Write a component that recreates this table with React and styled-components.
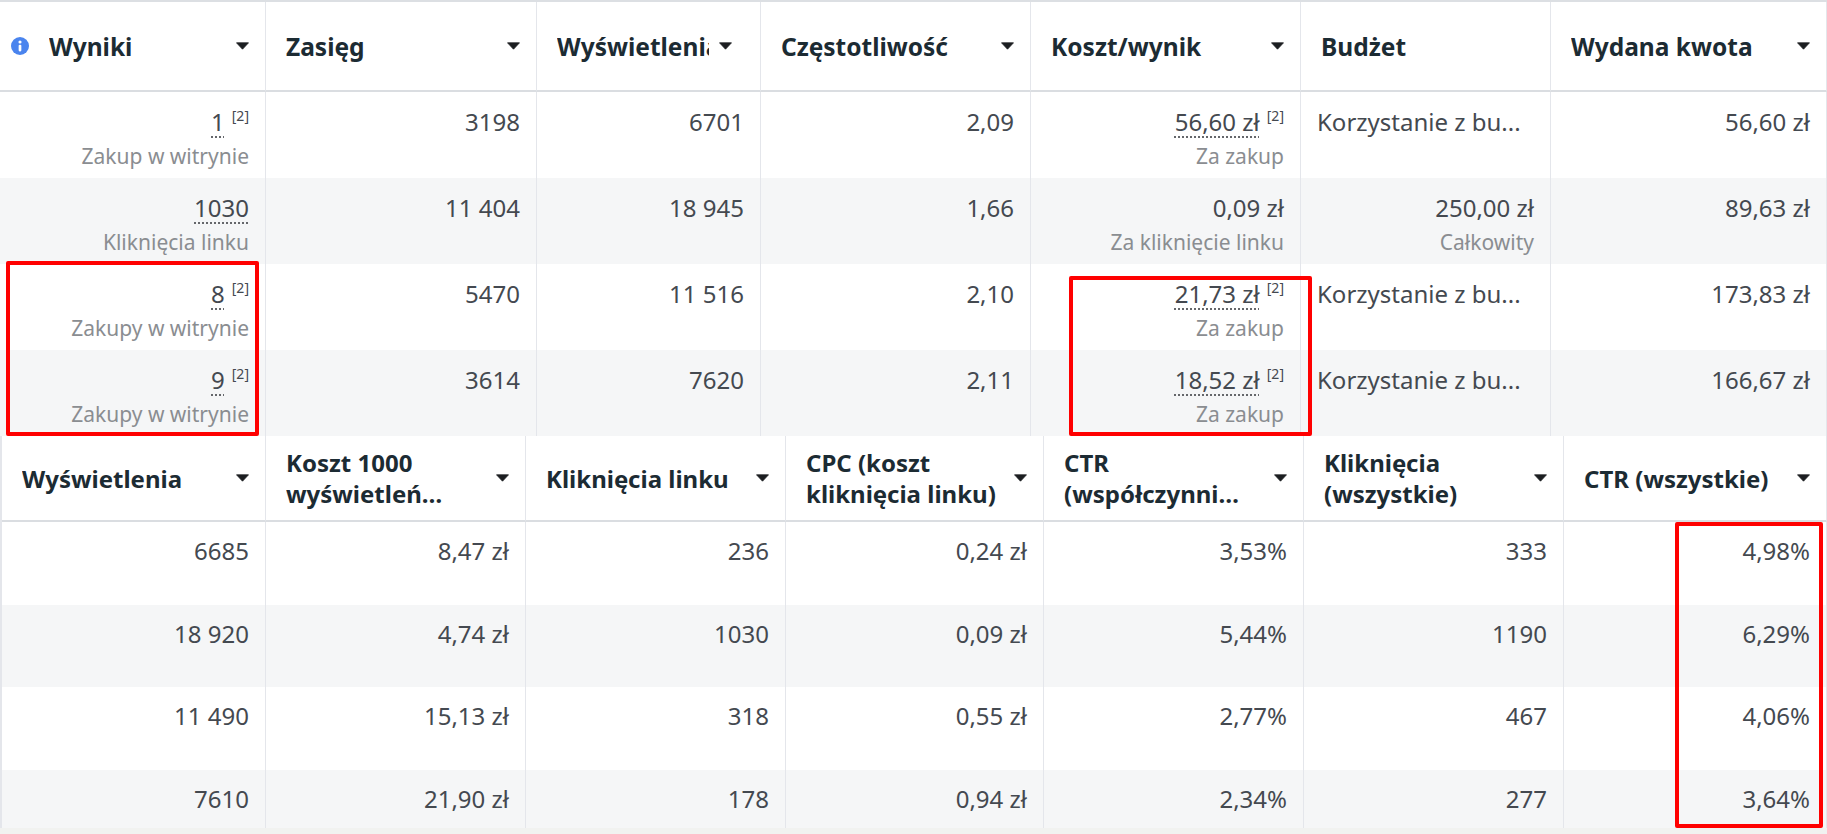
import React from 'react';
import styled, { createGlobalStyle } from 'styled-components';

const GlobalStyle = createGlobalStyle`
  html, body {
    margin: 0;
    padding: 0;
    background: #ffffff;
  }
  body {
    font-family: "Noto Sans", "Liberation Sans", sans-serif;
  }
`

const Page = styled.div`
    position: relative;
    width: 1827px;
    height: 834px;
    overflow: hidden;
    display: flex;
    flex-direction: column;
    background: #fff;
`
const Grid = styled.div`
    display: grid;
    grid-template-columns: ${p => p.$cols};
`
const TopGrid = styled(Grid)`
    border-top: 2px solid #dcdfe3;
`
const BottomGrid = styled(Grid)`
    border-left: 2px solid #e4e6eb;
`
const BottomBody = styled.div`
    height: 306px;
    overflow: hidden;
    border-left: 2px solid #e4e6eb;
`
const Strip = styled.div`
    flex: 1;
    background: #f1f2f0;
`
const HeadCell = styled.div`
    display: flex;
    align-items: center;
    gap: 10px;
    height: ${p => p.$h}px;
    padding: 0 16px 0 ${p => (p.$icon ? 11 : 20)}px;
    border-right: 1px solid #e4e6eb;
    border-bottom: 2px solid #dadde1;
    box-sizing: border-box;
    background: #fff;
    color: #1c2b33;
    font-weight: 700;
    font-size: ${p => p.$fs}px;
    min-width: 0;
`
const HeadLabel = styled.div`
    flex: 1;
    min-width: 0;
    max-width: ${p => (p.$clip ? `${p.$clip}px` : 'none')};
    overflow: hidden;
    white-space: nowrap;
    line-height: 31px;
`
const HeadLine = styled.span`
    display: block;
`
const InfoIcon = styled.svg`
    flex: none;
    margin-right: 10px;
`
const Caret = styled.svg`
    flex: none;
`
const Cell = styled.div`
    display: flex;
    flex-direction: column;
    align-items: ${p => (p.$left ? 'flex-start' : 'flex-end')};
    height: ${p => p.$h}px;
    padding: ${p => p.$pt}px 16px 0 ${p => (p.$left ? 16 : 12)}px;
    box-sizing: border-box;
    border-right: 1px solid #e4e6eb;
    background: ${p => (p.$alt ? '#f5f6f7' : '#fff')};
    min-width: 0;
`
const Value = styled.div`
    font-size: 24px;
    line-height: 30px;
    color: #444950;
    white-space: nowrap;
`
const Dotted = styled.span`
    text-decoration: underline dotted #65676b;
    text-decoration-thickness: 2px;
    text-underline-offset: 5px;
`
const Sup = styled.sup`
    font-size: 14px;
    color: #444950;
    margin-left: 7px;
    vertical-align: 10px;
    line-height: 0;
`
const Sub = styled.div`
    margin-top: 6px;
    font-size: 21px;
    line-height: 27px;
    color: #8a8d91;
    white-space: nowrap;
`
const Highlight = styled.div`
    position: absolute;
    left: ${p => p.$x}px;
    top: ${p => p.$y}px;
    width: ${p => p.$w}px;
    height: ${p => p.$h}px;
    border: 4px solid #ff0000;
    border-radius: 2px;
    box-sizing: border-box;
    pointer-events: none;
`

const topCols = '266px 271px 224px 270px 270px 250px 1fr';
const bottomCols = '264px 260px 260px 258px 260px 260px 1fr';

const topHeaders = [
    { label: ['Wyniki'], icon: true, caret: true },
    { label: ['Zasięg'], caret: true },
    { label: ['Wyświetlenia'], caret: true, clip: 152 },
    { label: ['Częstotliwość'], caret: true },
    { label: ['Koszt/wynik'], caret: true },
    { label: ['Budżet'] },
    { label: ['Wydana kwota'], caret: true },
];

const bottomHeaders = [
    { label: ['Wyświetlenia'], caret: true },
    { label: ['Koszt 1000', 'wyświetleń…'], caret: true },
    { label: ['Kliknięcia linku'], caret: true },
    { label: ['CPC (koszt', 'kliknięcia linku)'], caret: true },
    { label: ['CTR', '(współczynni…'], caret: true },
    { label: ['Kliknięcia', '(wszystkie)'], caret: true },
    { label: ['CTR (wszystkie)'], caret: true },
];

const budget = { value: 'Korzystanie z bu...', left: true };

const topRows = [
    [
        { value: '1', dotted: true, sup: true, sub: 'Zakup w witrynie' },
        { value: '3198' }, { value: '6701' }, { value: '2,09' },
        { value: '56,60 zł', dotted: true, sup: true, sub: 'Za zakup' },
        budget,
        { value: '56,60 zł' },
    ],
    [
        { value: '1030', dotted: true, sub: 'Kliknięcia linku' },
        { value: '11 404' }, { value: '18 945' }, { value: '1,66' },
        { value: '0,09 zł', sub: 'Za kliknięcie linku' },
        { value: '250,00 zł', sub: 'Całkowity' },
        { value: '89,63 zł' },
    ],
    [
        { value: '8', dotted: true, sup: true, sub: 'Zakupy w witrynie' },
        { value: '5470' }, { value: '11 516' }, { value: '2,10' },
        { value: '21,73 zł', dotted: true, sup: true, sub: 'Za zakup' },
        budget,
        { value: '173,83 zł' },
    ],
    [
        { value: '9', dotted: true, sup: true, sub: 'Zakupy w witrynie' },
        { value: '3614' }, { value: '7620' }, { value: '2,11' },
        { value: '18,52 zł', dotted: true, sup: true, sub: 'Za zakup' },
        budget,
        { value: '166,67 zł' },
    ],
];

const bottomRows = [
    ['6685', '8,47 zł', '236', '0,24 zł', '3,53%', '333', '4,98%'],
    ['18 920', '4,74 zł', '1030', '0,09 zł', '5,44%', '1190', '6,29%'],
    ['11 490', '15,13 zł', '318', '0,55 zł', '2,77%', '467', '4,06%'],
    ['7610', '21,90 zł', '178', '0,94 zł', '2,34%', '277', '3,64%'],
];

const Header = ({ col, height, fontSize }) => (
    <HeadCell $h={height} $icon={col.icon} $fs={fontSize}>
        {col.icon && (
            <InfoIcon width="18" height="18" viewBox="0 0 16 16">
                <circle cx="8" cy="8" r="8" fill="#4a84ee" />
                <circle cx="8" cy="4.4" r="1.4" fill="#fff" />
                <rect x="6.8" y="6.8" width="2.4" height="6" rx="1" fill="#fff" />
            </InfoIcon>
        )}
        <HeadLabel $clip={col.clip}>
            {col.label.map(line => <HeadLine key={line}>{line}</HeadLine>)}
        </HeadLabel>
        {col.caret && (
            <Caret width="13" height="8" viewBox="0 0 13 8">
                <path d="M0.5 0.8h12l-6 6.4z" fill="#1c1e21" stroke="#1c1e21" strokeWidth="0.8" strokeLinejoin="round" />
            </Caret>
        )}
    </HeadCell>
);

const App = () => {
    return (
        <Page>
            <GlobalStyle />
            <TopGrid $cols={topCols}>
                {topHeaders.map((col, i) => <Header key={i} col={col} height={90} fontSize={24.5} />)}
                {topRows.map((row, r) =>
                    row.map((c, i) => (
                        <Cell key={`${r}-${i}`} $alt={r % 2 === 1} $left={c.left} $h={86} $pt={15}>
                            <Value>
                                {c.dotted ? <Dotted>{c.value}</Dotted> : c.value}
                                {c.sup && <Sup>[2]</Sup>}
                            </Value>
                            {c.sub && <Sub>{c.sub}</Sub>}
                        </Cell>
                    ))
                )}
            </TopGrid>
            <BottomGrid $cols={bottomCols}>
                {bottomHeaders.map((col, i) => <Header key={i} col={col} height={86} fontSize={24} />)}
            </BottomGrid>
            <BottomBody>
                <Grid $cols={bottomCols}>
                    {bottomRows.map((row, r) =>
                        row.map((v, i) => (
                            <Cell key={`${r}-${i}`} $alt={r % 2 === 1} $h={r === 1 ? 82 : 83} $pt={14}>
                                <Value>{v}</Value>
                            </Cell>
                        ))
                    )}
                </Grid>
            </BottomBody>
            <Strip />
            <Highlight $x={6} $y={261} $w={253} $h={175} />
            <Highlight $x={1069} $y={276} $w={243} $h={160} />
            <Highlight $x={1675} $y={522} $w={148} $h={306} />
        </Page>
    )
}

export default App
